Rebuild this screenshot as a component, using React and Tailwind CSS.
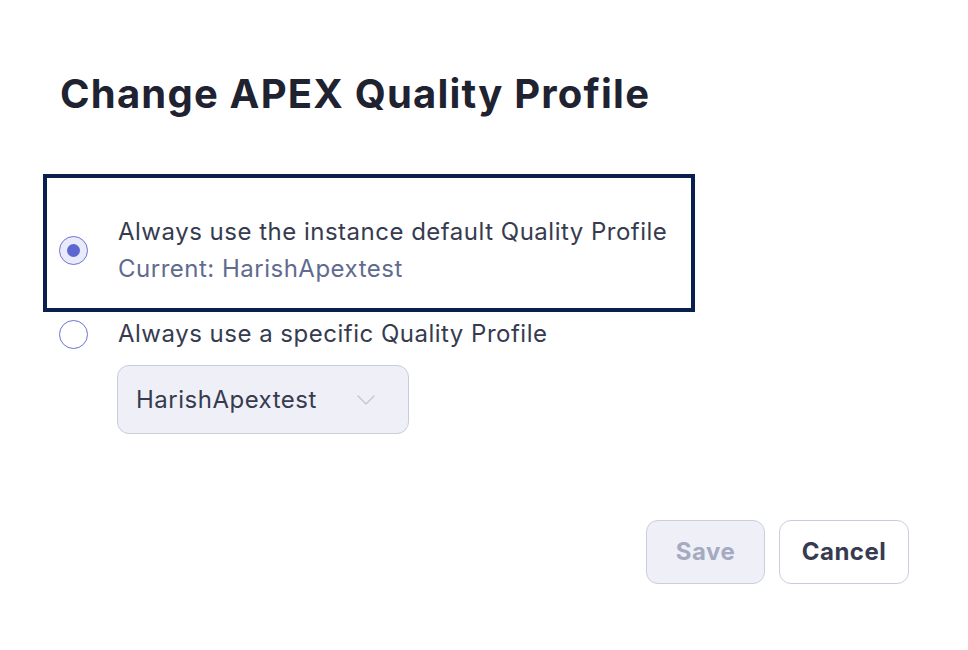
import React, { useState } from "react";

const Radio = ({ checked }) => (
  <span
    className={`flex h-[29px] w-[29px] shrink-0 items-center justify-center rounded-full border-[1.5px] border-[#6a72d6] ${
      checked ? "bg-[#e9ebfa]" : "bg-white"
    }`}
  >
    {checked && <span className="h-[13px] w-[13px] rounded-full bg-[#5d67cf]" />}
  </span>
);

export default function App() {
  const [mode, setMode] = useState("default");

  return (
    <div
      className="min-h-[650px] w-full bg-white text-[#363b4f]"
      style={{ fontFamily: "Inter, 'Noto Sans', sans-serif" }}
    >
      <div className="pl-[60px] pr-[59px] pt-[70px]">
        <h1 className="text-[40px] font-bold leading-[48px] tracking-[1.2px] text-[#1f2230]">
          Change APEX Quality Profile
        </h1>

        <div className="mt-[56px] flex flex-col text-[24px] leading-[36px] tracking-[0.5px]">
          <div
            className="-ml-[17px] flex w-[652px] cursor-pointer items-center gap-[30px] border-4 border-[#0b1f4f] pl-[12px] pt-[36px] pb-[21px]"
            onClick={() => setMode("default")}
          >
            <Radio checked={mode === "default"} />
            <div>
              <div>Always use the instance default Quality Profile</div>
              <div className="mt-px text-[#5f6b8f]">Current: HarishApextest</div>
            </div>
          </div>

          <div
            className="mt-[4px] flex cursor-pointer items-center gap-[30px] -ml-px"
            onClick={() => setMode("specific")}
          >
            <Radio checked={mode === "specific"} />
            <div>Always use a specific Quality Profile</div>
          </div>

          <div className="ml-[57px] mt-[13px]">
            <button className="flex h-[69px] w-[292px] items-center justify-between rounded-xl border border-[#c7cce0] bg-[#eff0f7] pl-[18px] pr-[33px] tracking-[0.5px] text-[#363b4f]">
              <span>HarishApextest</span>
              <svg width="18" height="10" viewBox="0 0 18 10" fill="none">
                <path d="M1 1l8 8 8-8" stroke="#c3c7d3" strokeWidth="1.4" strokeLinecap="round" strokeLinejoin="round" />
              </svg>
            </button>
          </div>
        </div>

        <div className="mt-[86px] flex justify-end gap-[14px] text-[24px] tracking-[0.5px]">
          <button
            disabled
            className="h-[64px] w-[119px] rounded-xl border border-[#c9cde0] bg-[#eff0f7] font-bold text-[#a5aac1]"
          >
            Save
          </button>
          <button className="h-[64px] w-[130px] rounded-xl border border-[#c9cde0] bg-white font-bold text-[#363b4f]">
            Cancel
          </button>
        </div>
      </div>
    </div>
  );
}
